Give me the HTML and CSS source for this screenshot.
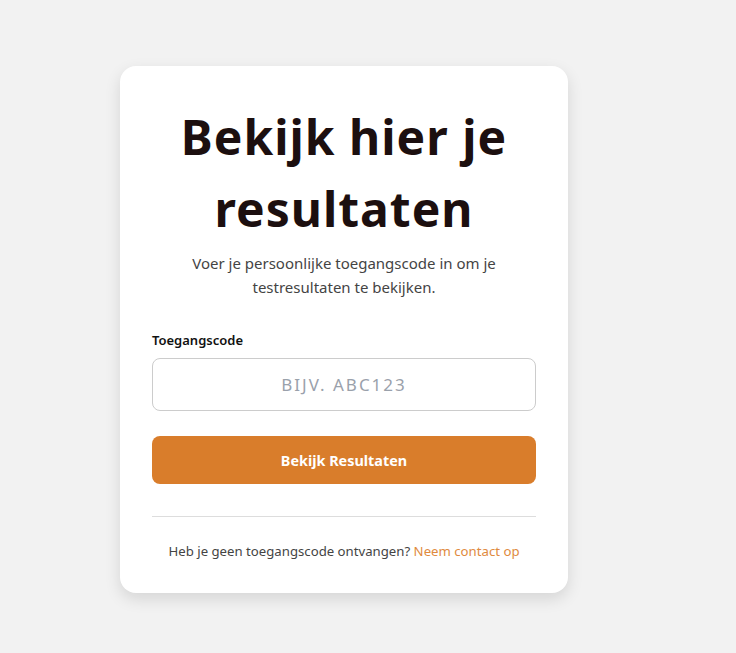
FILE: index.html
```html
<!DOCTYPE html>
<html lang="nl">
<head>
    <meta charset="UTF-8">
    <title>Resultaten</title>
    <link rel="stylesheet" href="styles.css">
</head>
<body>
<div class="page">
    <div class="card">
        <h1 class="title">Bekijk hier je resultaten</h1>
        <p class="intro">Voer je persoonlijke toegangscode in om je testresultaten te bekijken.</p>
        <form class="form">
            <label class="label" for="code">Toegangscode</label>
            <input class="code" id="code" type="text" placeholder="bijv. ABC123">
            <button class="submit" type="button">Bekijk Resultaten</button>
        </form>
        <div class="foot">
            Heb je geen toegangscode ontvangen? <a href="#">Neem contact op</a>
        </div>
    </div>
</div>
</body>
</html>
```

FILE: styles.css
```css
* {
    margin: 0;
    padding: 0;
    box-sizing: border-box;
}

body {
    background-color: #f2f2f2;
    font-family: "Noto Sans", "Open Sans", sans-serif;
    color: #222;
}

.page {
    padding: 66px 0 40px 120px;
}

.card {
    width: 448px;
    background-color: #ffffff;
    border-radius: 16px;
    padding: 35px 32px 32px;
    box-shadow: 0 6px 16px rgba(0, 0, 0, 0.12);
}

.title {
    font-size: 48px;
    line-height: 72px;
    font-weight: 700;
    letter-spacing: 1px;
    text-align: center;
    color: #1c0f0f;
}

.intro {
    margin-top: 6px;
    font-size: 15px;
    line-height: 24px;
    text-align: center;
    color: #444;
}

.form {
    margin-top: 32px;
    display: flex;
    flex-direction: column;
}

.label {
    font-size: 13px;
    font-weight: 600;
    color: #111;
    margin-bottom: 9px;
}

.code {
    height: 53px;
    border: 1px solid #cccccc;
    border-radius: 8px;
    font-family: "Noto Sans", "Open Sans", sans-serif;
    font-size: 17px;
    letter-spacing: 2px;
    text-align: center;
    text-transform: uppercase;
    color: #222;
    outline: none;
}

.code::placeholder {
    color: #9aa1ab;
}

.submit {
    margin-top: 25px;
    height: 48px;
    border: none;
    border-radius: 8px;
    background-color: #d97d2b;
    color: #ffffff;
    font-family: "Noto Sans", "Open Sans", sans-serif;
    font-size: 14.4px;
    font-weight: 700;
    cursor: pointer;
}

.foot {
    margin-top: 32px;
    border-top: 1px solid #dddddd;
    padding-top: 24px;
    font-size: 13.2px;
    line-height: 20px;
    text-align: center;
    color: #444;
}

.foot a {
    color: #e08a3e;
    text-decoration: none;
}
```
